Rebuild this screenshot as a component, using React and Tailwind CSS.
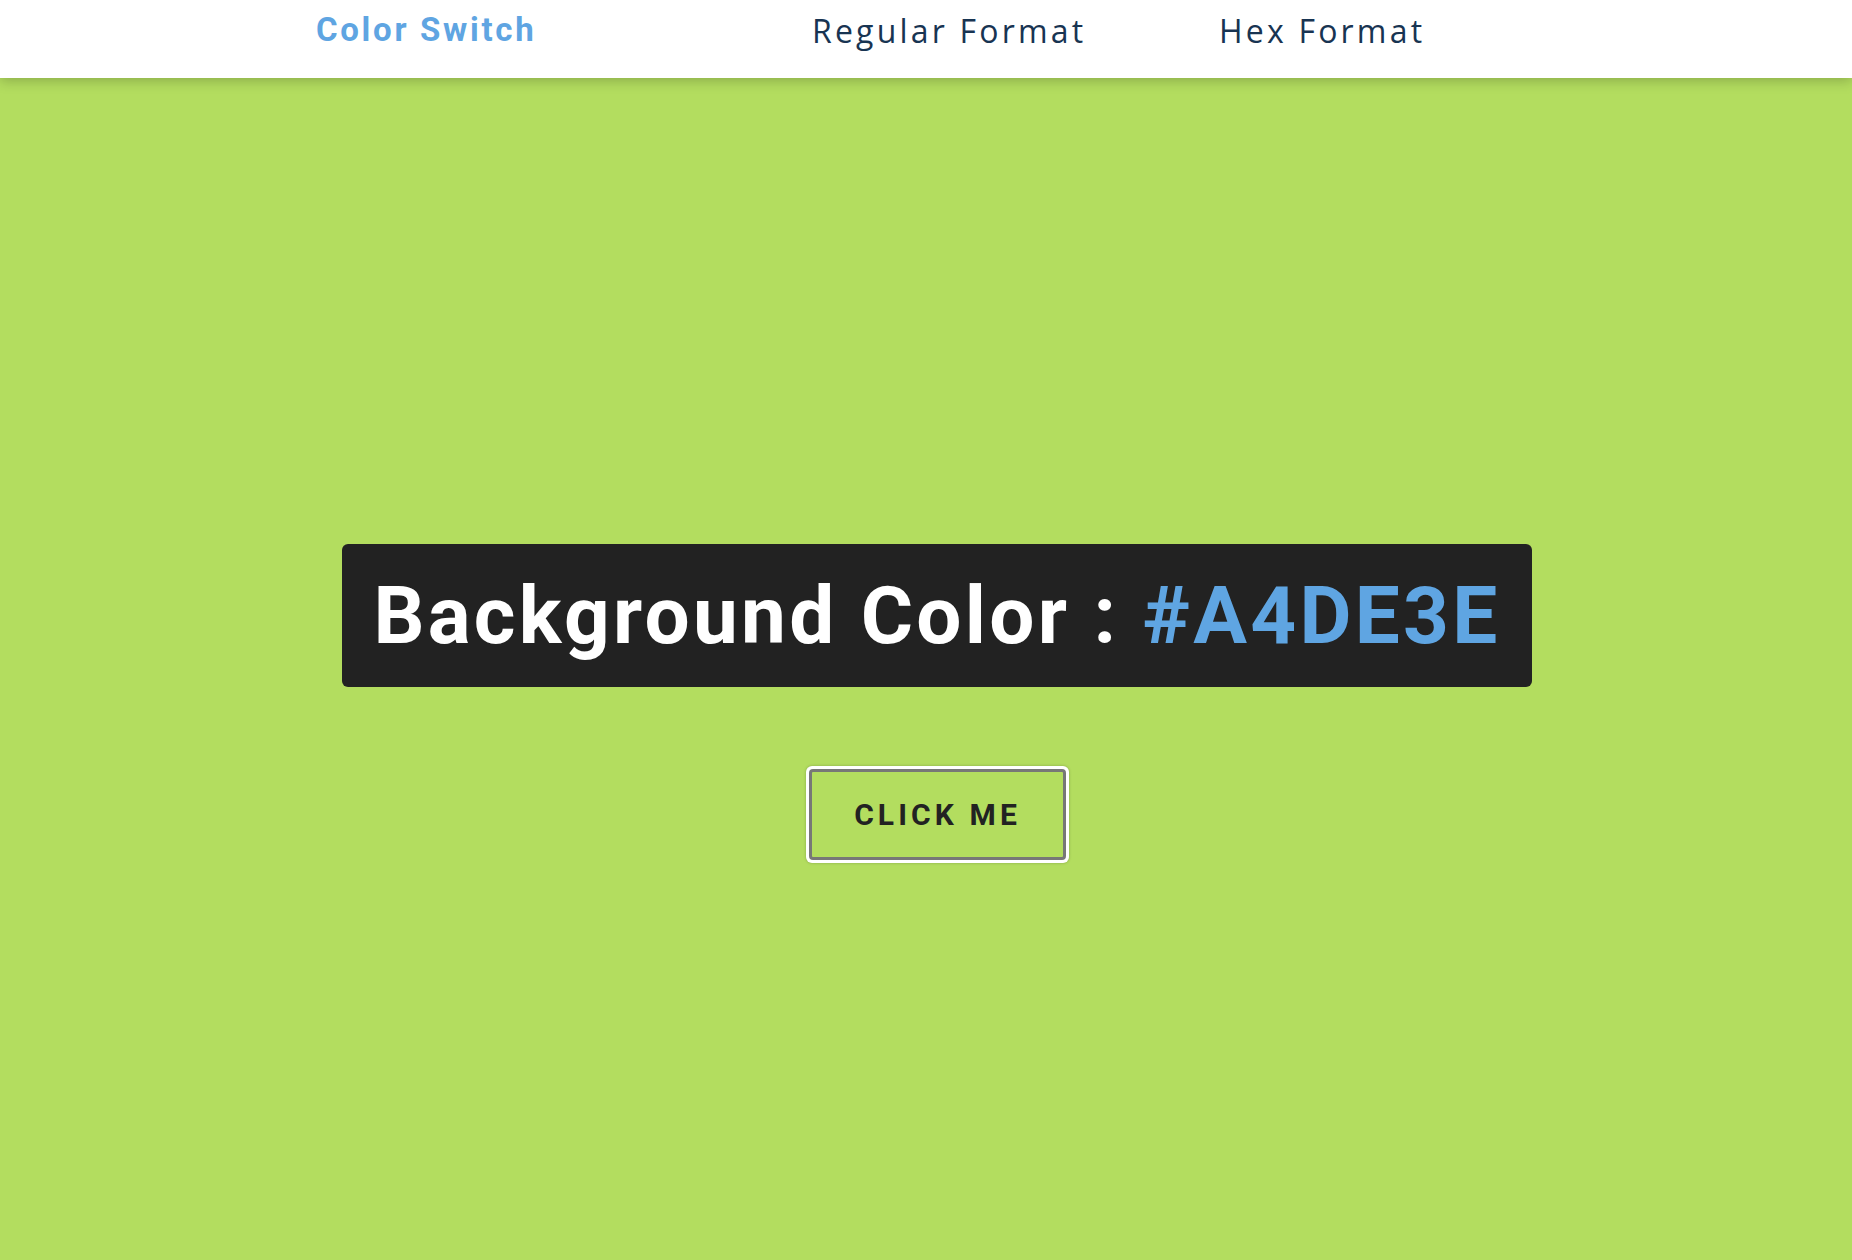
export default function App() {
  return (
    <div className="min-h-screen w-full bg-[#b3dd5f] flex flex-col">
      <header className="relative z-10 h-[78px] w-full bg-white shadow-[0_3px_12px_rgba(0,0,0,0.22)] pl-[316px] pb-[16px] grid grid-cols-[496px_407px_1fr] items-center">
        <div className="font-['Roboto'] font-bold text-[33px] leading-none tracking-[2.7px] text-[#5fa5e2] -mt-[3px]">
          Color Switch
        </div>
        <div className="font-['Open_Sans'] text-[32px] leading-none tracking-[3.2px] text-[#183452]">
          Regular Format
        </div>
        <div className="font-['Open_Sans'] text-[32px] leading-none tracking-[3.2px] text-[#183452]">
          Hex Format
        </div>
      </header>
      <main className="flex flex-col items-center pl-[22px]">
        <div className="mt-[466px] w-[1190px] h-[143px] rounded-md bg-[#222222] flex items-center justify-center">
          <h1 className="font-['Roboto'] font-bold text-[80px] leading-none tracking-[3.3px] text-white">
            Background Color : <span className="text-[#5fa5e2]">#A4DE3E</span>
          </h1>
        </div>
        <button className="mt-[79px] w-[263px] h-[97px] rounded-[6px] bg-white p-[3px] shadow-[0_0_3px_rgba(0,0,0,0.25)]">
          <span className="flex w-full h-full items-center justify-center rounded-[4px] border-[3px] border-[#777777] bg-[#b3dd5f] font-['Roboto'] font-bold text-[30px] leading-none tracking-[4.1px] text-[#222222] pl-[1px]">
            CLICK ME
          </span>
        </button>
      </main>
    </div>
  );
}
